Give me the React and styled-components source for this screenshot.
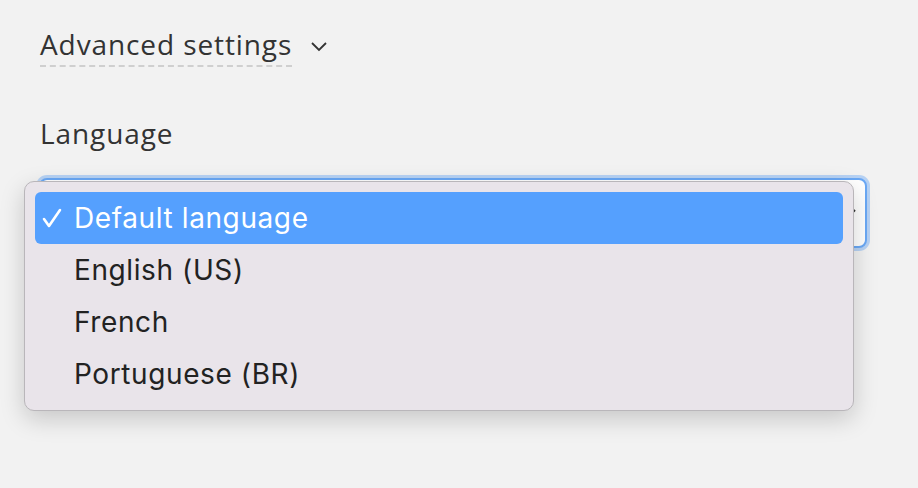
import React from "react";
import styled, { createGlobalStyle } from "styled-components";

const Global = createGlobalStyle`
  html, body { margin: 0; background: #f2f2f2; }
  body { width: 918px; height: 488px; overflow: hidden; }
`;

const Page = styled.div`
  position: relative;
  padding: 22px 51px 0 40px;
  font-family: "Open Sans", "Lato", sans-serif;
  color: #333;
`;

const Toggle = styled.div`
  display: flex;
  align-items: center;
  gap: 18px;
  height: 48px;
`;

const ToggleText = styled.span`
  font-size: 28px;
  letter-spacing: 0.9px;
  border-bottom: 2px dashed #cfcfcf;
  padding-bottom: 2px;
`;

const Label = styled.div`
  margin-top: 44px;
  font-size: 28px;
  letter-spacing: 0.9px;
`;

const Select = styled.div`
  margin-top: 26px;
  margin-left: -1px;
  height: 66px;
  border-radius: 8px;
  background: #fff;
  border: 2px solid #6aa8f5;
  box-shadow: 0 0 0 3px #b7d2f4;
  display: flex;
  align-items: center;
  justify-content: flex-end;
  padding-right: 8px;
  color: #444;
`;

const Menu = styled.div`
  position: absolute;
  left: 24px;
  top: 181px;
  width: 808px;
  padding: 10px 10px 10px;
  background: #e9e4ea;
  border: 1px solid #b9b6ba;
  border-radius: 10px;
  box-shadow: 0 8px 24px rgba(0,0,0,0.18);
  font-family: "Inter", "Liberation Sans", sans-serif;
`;

const Item = styled.div`
  height: 52px;
  display: flex;
  align-items: center;
  border-radius: 6px;
  font-size: 28px;
  letter-spacing: 0.6px;
  color: ${p => (p.$active ? "#fff" : "#222")};
  background: ${p => (p.$active ? "#55a0fe" : "transparent")};
  padding-left: 6px;
`;

const Check = styled.span`
  width: 33px;
  display: flex;
  align-items: center;
`;

const items = ["Default language", "English (US)", "French", "Portuguese (BR)"];

export default function App() {
  return (
    <>
      <Global />
      <Page>
        <Toggle>
          <ToggleText>Advanced settings</ToggleText>
          <svg width="18" height="12" viewBox="0 0 18 12" fill="none" stroke="#333" strokeWidth="1.8">
            <path d="M2 3l7 7 7-7" />
          </svg>
        </Toggle>
        <Label>Language</Label>
        <Select>
          <svg width="14" height="10" viewBox="0 0 14 10" fill="none" stroke="#333" strokeWidth="2">
            <path d="M2 2l5 5 5-5" />
          </svg>
        </Select>
        <Menu>
          {items.map((t, i) => (
            <Item key={t} $active={i === 0}>
              <Check>
                {i === 0 && (
                  <svg width="22" height="22" viewBox="0 0 22 22" fill="none" stroke="#fff" strokeWidth="2.6" strokeLinecap="round" strokeLinejoin="round">
                    <path d="M3 12l5 7L19 3" />
                  </svg>
                )}
              </Check>
              {t}
            </Item>
          ))}
        </Menu>
      </Page>
    </>
  );
}
